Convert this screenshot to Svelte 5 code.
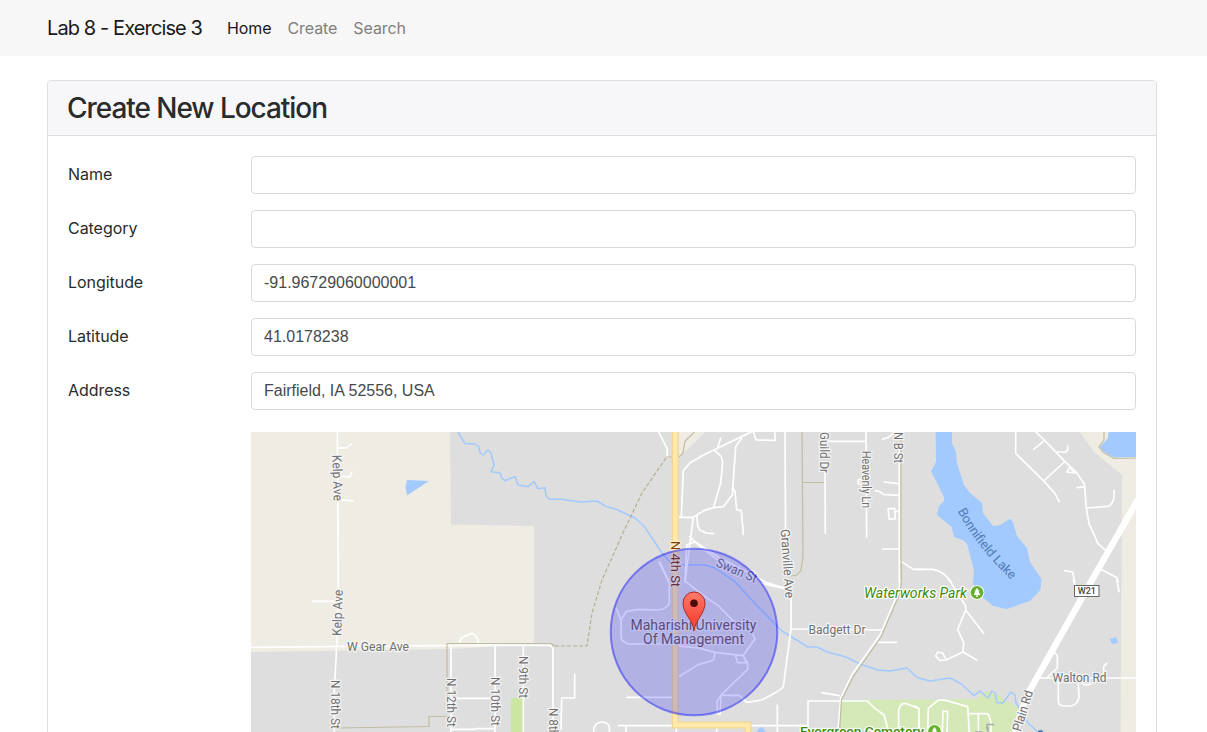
<script>
  const links = ['Home', 'Create', 'Search'];
  const fields = [
    { id: 'name', label: 'Name', value: '' },
    { id: 'category', label: 'Category', value: '' },
    { id: 'longitude', label: 'Longitude', value: '-91.96729060000001' },
    { id: 'latitude', label: 'Latitude', value: '41.0178238' },
    { id: 'address', label: 'Address', value: 'Fairfield, IA 52556, USA' }
  ];

  // Street geometry is stored per map tile, in tile units of a third of a pixel.
  const tiles = [
    { x: 250, y: 430, d: 'M262 0L265 456M262 54H290L303 42M264 140H300L306 126M268 209L310 213' },
    { x: 475, y: 430, d: 'M548 0L577 57V82M675 82L645 98L625 122L619 262M610 262H655L675 248M655 262L630 456M666 256L668 288L675 300M644 320L675 350M554 395L580 450' },
    { x: 700, y: 430, d: 'M0 80L155 5M62 24L52 56M44 62L64 80L68 96L62 160L40 233M125 24L107 50L97 195L70 230L40 233L12 242L0 250M97 176L105 184L110 240L124 242L130 313M0 300L18 309L40 311M160 5L168 30L226 31L224 5M255 5L257 360M0 350L60 395M375 34H497M375 100L376 310M498 5L500 322M484 147L475 150V162L484 164M580 10L565 22L548 28M598 60V456M552 156L597 161M526 182L540 185L550 193L597 196M564 236L584 235L586 266L568 268L564 236M586 244H597M548 357H598M600 392L640 418H675' },
    { x: 915, y: 430, d: 'M302 5V70L385 152L420 190L433 216M362 5L388 30L450 95L485 128L508 162L514 235L522 280L549 341L575 364M388 32L356 58M426 66H452Q460 64 458 48M448 96L386 153M464 112L456 126L480 129M466 112L474 124M508 170L486 173M515 234L580 229Q600 220 597 182M0 418H54Q88 424 108 456M448 422L473 426L479 456M558 418L606 443L609 456' },
    { x: 250, y: 580, d: 'M265 0L260 200L253 330V456M188 64H260M3 202L400 198L675 196M603 198V456M630 190L632 175L665 160L675 166M605 355H675M604 448H675' },
    { x: 475, y: 580, d: 'M0 166L8 176L10 194M0 196H222Q235 198 234 212V456M60 198V456M145 198V456M0 355H60M0 446H60M299 283V354H260L258 448M356 456Q355 427 382 426Q407 428 403 456M430 437H604M453 437V456M456 352H600M604 437V456' },
    { x: 700, y: 580, d: 'M185 9Q220 20 270 27M273 40V146L250 320Q245 330 185 360L140 367L118 346H66M275 147L545 150M600 0L596 35L540 165L455 285L422 355L414 456M533 187H590M365 338L418 347M232 375V456M145 437H324M324 437V363H502L525 385L552 405L566 456M50 440V456M596 456V390Q602 367 620 371L657 386L656 456' },
    { x: 915, y: 580, d: 'M103 0L152 78V90L128 148L146 188L144 216L93 240L74 241L62 228L68 216L83 219L93 238M152 90L206 160M144 216L185 240M367 294H663M418 218L427 226V264L397 292M566 292V260L575 250M430 300V365Q432 378 448 378H465Q488 375 492 352L490 312M500 310Q515 320 530 310M475 0L481 20M606 0L612 35M38 456L40 385L70 360L92 361L158 380L163 456M82 456L84 394H98L96 456M163 401H215Q230 405 228 456M0 378L12 387V456M190 403V456' },
    { x: 605, y: 540, d: 'M240 125L245 15L270 5L335 48L485 128L540 145M163 67L193 130V190Q187 207 160 210L100 208L64 214L48 240L34 205M48 240V285L50 300L68 312H220M242 125L300 170L340 197L382 240L440 275L450 297L414 347L330 337L280 324L220 318M330 338L326 360L280 374L222 410M392 348L398 368H428L414 347L428 372V388L348 465L336 485L337 520L345 524L348 465' }
  ];

  const labels = [
    { t: 'Kelp Ave', x: 333, y: 478, r: 88, w: 46 },
    { t: 'Kelp Ave', x: 342, y: 613, r: -88, w: 46 },
    { t: 'W Gear Ave', x: 378, y: 651, r: 0, w: 62 },
    { t: 'N 18th St', x: 330.5, y: 704.5, r: 90, w: 49 },
    { t: 'N 12th St', x: 447, y: 702.5, r: 90, w: 49 },
    { t: 'N 10th St', x: 491, y: 701.5, r: 90, w: 49 },
    { t: 'N 9th St', x: 519, y: 677, r: 90, w: 42 },
    { t: 'N 8th St', x: 549, y: 729, r: 90, w: 42 },
    { t: 'Guild Dr', x: 820, y: 452.5, r: 90, w: 41 },
    { t: 'N B St', x: 894, y: 447.5, r: 90, w: 31 },
    { t: 'Heavenly Ln', x: 862, y: 479.5, r: 90, w: 57, s: 12 },
    { t: 'Granville Ave', x: 783, y: 564, r: 86, w: 69 },
    { t: 'Badgett Dr', x: 837, y: 634, r: 0, w: 57 },
    { t: 'Walton Rd', x: 1079.5, y: 682, r: 0, w: 54 },
    { t: 'Plain Rd', x: 1027, y: 712, r: -73, w: 42 },
    { t: 'Swan St', x: 735, y: 574.5, r: 23, w: 43 },
    { t: 'N 4th St', x: 671, y: 564, r: 90, w: 46, c: 'highway' },
    { t: 'Maharishi University', x: 693.5, y: 630, r: 0, w: 126, s: 14, c: 'campus' },
    { t: 'Of Management', x: 693.5, y: 644, r: 0, w: 101, s: 14, c: 'campus' },
    { t: 'Waterworks Park', x: 915.5, y: 597.5, r: 0, w: 103, s: 14, c: 'park' },
    { t: 'Evergreen Cemetery', x: 862, y: 735.5, r: 0, w: 124, s: 13.5, c: 'cemetery' }
  ];
  const trees = [{ x: 977, y: 592.5 }, { x: 934.5, y: 731.5 }];
</script>

<div class="page">
  <nav>
    <a class="brand" href="#home">Lab 8 - Exercise 3</a>
    {#each links as link, i}
      <a class="link" class:active={i === 0} href="#{link.toLowerCase()}">{link}</a>
    {/each}
  </nav>

  <main class="card">
    <header><h3>Create New Location</h3></header>
    <form>
      {#each fields as field}
        <div class="row">
          <label for={field.id}>{field.label}</label>
          <input id={field.id} type="text" value={field.value} />
        </div>
      {/each}

      <div class="row map-row">
        <svg class="map" viewBox="251 432 885 320" width="885" height="320" role="img" aria-label="Map">
          <defs>
            <linearGradient id="pin" x1="0" y1="0" x2="0" y2="1">
              <stop offset="0" stop-color="#ff7a6b" />
              <stop offset=".7" stop-color="#f8493a" />
            </linearGradient>
          </defs>
          <rect x="251" y="432" width="885" height="320" fill="#dedede" />
          <path class="land" d="M251 432H450L451 524.5L534 526V644L450 649L251 652Z" />
          <path class="land" d="M1080 432L1094 452L1122 475L1120.500 752H1136V432Z" />
          <path class="land" d="M679 432H705L692 445L679 457Z" />
          <path fill="#cbe6a3" d="M511 698H523.500V752H511Z" />
          <path fill="#d5e8b8" d="M840 700L976 699L983 694L988 691L1000 696L1018 708L1015 752H838Z" />

          <path class="water" d="M935.700 432L936 462L931 471L944 497V501L939 506L937 515L951.700 527L954 537L963 540L967 544L974 570L973 584L980 595L993 606L1007 609L1030 601L1040.500 590L1041.500 579L1030 562L1027 548L1017 536L1013 522L1010 518.700L1000 525L993 526L983 513L982 503L970 493L964 485L957 463L956 452L952 443V432Z" />
          <path class="water" d="M1108.500 432L1108 438L1100 447L1103 451L1114 457.500L1136 457V432Z" />
          <path class="water" d="M407 480L429 481L407 495.500L405.500 487ZM1110 639L1116 637L1118 643L1112 644ZM757 732L758 729L762 727L766 732Z" />
          <path class="stream" d="M458 432L465 443.500L475 444L479 447L480 452.500L483 455L488 450L491 452.700L494 465L491 471.700L500 472.700L501.700 478L505 480.700L515 476.500L518 485L528 486.700L534 481.700L538 488.700L545 487.700L546 496L550 499.300H562L580 502L597 501L605 506L618 510L635 518L644 526L662 553L670 561.700L682 565H705L715 568L735 581.700L758 606.700L782 631L808 647H817L827 652L845 656.700L860 664L878 670L890 671L907 668L917 677.500L930 681L950 678L961.500 684L974 695.700L980 691L988 698L992 691L995 693L997 702.700H1003L1011 692L1015 695L1016 703L1028 723L1038 732" />

          {#each tiles as tile}
            <path class="road" transform="translate({tile.x} {tile.y}) scale(.33333)" d={tile.d} />
          {/each}
          <path class="bound" d="M694.500 432L685 441L683 453L679 457H666M802 432L803 557L801 570L797 575L791 576M802 482.500H824M901 438V557L901.500 580L900.500 592L881 637L853 677L841.500 700L839.500 732M447 714V643.500H551L555 645.500M338 728L429 726.500V716.500H449M1104 432V440L1099 447L1103 452L1114 458.500L1136 458" />
          <path class="bound dash" d="M666 458L642 493L622 535L602 580L592 613L587 646H552" />
          <path fill="none" stroke="#fff" stroke-width="6.5" d="M1138 499.500L1092 580L1030 690Q1023 704 1015 732V752" />
          <path fill="none" stroke="#f3d695" stroke-width="7" d="M675.300 430V725H748V752" />
          <path fill="none" stroke="#ffe9a9" stroke-width="4.500" d="M675.300 430V725H748V752" />
          <path fill="none" stroke="#a8a8a8" stroke-width="1.300" d="M987 730V724.500H994M988 727V732M975 732H982" />

          {#each labels as l}
            <text class="street {l.c ?? ''}" transform="translate({l.x} {l.y}) rotate({l.r})" font-size={l.s ?? 13} textLength={l.w} lengthAdjust="spacingAndGlyphs">{l.t}</text>
          {/each}
          <path id="lake-line" fill="none" d="M957.500 511Q977 549 1020 588" />
          <text class="lake" font-size="13"><textPath href="#lake-line" textLength="88">Bonnifield Lake</textPath></text>

          {#each trees as tree}
            <g transform="translate({tree.x} {tree.y})">
              <circle r="7.300" fill="#fff" />
              <circle r="6.400" fill="#68b12f" />
              <path fill="#fff" d="M0 -4.500L2.400 -1H1.500L3.400 2.500H.7V4.500H-.7V2.500H-3.400L-1.500 -1H-2.400Z" />
            </g>
          {/each}
          <rect x="1074.500" y="585.500" width="24.500" height="11" fill="#fff" stroke="#666" />
          <text class="shield" x="1086.800" y="594.300" font-size="9" textLength="18">W21</text>
          <circle cx="1040.500" cy="733" r="3" fill="#477fb8" />

          <circle cx="694" cy="632" r="83.300" fill="#00f" fill-opacity=".2" stroke="#00f" stroke-opacity=".42" stroke-width="2" />
          <path fill="url(#pin)" stroke="#a92d22" stroke-width="1" d="M694 631C692.500 619 683 614 683 603A11 11 0 0 1 705 603C705 614 695.500 619 694 631Z" />
          <circle cx="694" cy="603.300" r="3.800" fill="#4c0c08" />
        </svg>
      </div>
    </form>
  </main>
</div>

<style>
  :global(body) { margin: 0; background: #fff; overflow: hidden; }
  .page { height: 732px; overflow: hidden; box-sizing: border-box; font: 16px/24px Inter, sans-serif; color: #292b2c; }
  nav { height: 56px; box-sizing: border-box; padding: 0 47px; background: #f7f7f7; display: flex; align-items: center; gap: 16px; }
  a { text-decoration: none; }
  .brand { width: 156px; margin-right: 8px; font-size: 20px; letter-spacing: -.89px; color: #191919; white-space: nowrap; }
  .link { color: #808080; letter-spacing: -.08px; }
  .link.active { color: #191919; }
  .card { margin: 24px 50px 0 47px; border: 1px solid #dfdfdf; border-radius: 4px; box-sizing: border-box; height: 760px; }
  header { height: 55px; box-sizing: border-box; padding: 12px 20px 0 19px; background: #f7f7f9; border-bottom: 1px solid #dcdcdd; border-radius: 3px 3px 0 0; }
  h3 { margin: 0; font-size: 28px; line-height: 31px; font-weight: 500; letter-spacing: -1.05px; }
  form { padding: 20px; display: flex; flex-direction: column; gap: 16px; }
  .row { display: grid; grid-template-columns: 183px 885px; align-items: center; }
  label { letter-spacing: -.05px; padding-bottom: 2px; }
  input { width: 885px; height: 38px; box-sizing: border-box; padding: 0 12px; border: 1px solid #d9d9d9; border-radius: 4px; background: #fff; color: #464a4c; font: 16px "Liberation Sans", sans-serif; outline: 0; }
  .map-row { padding-top: 6px; }
  .map { grid-column: 2; display: block; overflow: hidden; }
  .land { fill: #efece3; }
  .water { fill: #a2caff; }
  .stream { fill: none; stroke: #a2caff; stroke-width: 1.5; stroke-linejoin: round; }
  .bound { fill: none; stroke: #c1bca2; stroke-width: 1.2; }
  .dash { stroke: #b5b092; stroke-dasharray: 4 2; }
  .road { fill: none; stroke: #fff; stroke-width: 5; stroke-linejoin: round; stroke-linecap: round; }
  .street { font-family: Roboto, sans-serif; text-anchor: middle; fill: #707070; stroke: #f5f5f5; stroke-width: 2.5px; stroke-linejoin: round; paint-order: stroke; }
  .highway { fill: #7d3a0b; stroke: #fff0c9; }
  .campus { fill: #755c56; stroke: #eee; }
  .park, .cemetery { fill: #3c8b08; stroke: #fff; }
  .park { font-style: italic; }
  .cemetery { font-weight: 500; }
  .lake { font-family: Roboto, sans-serif; fill: #527cb5; }
  .shield { font-family: Roboto, sans-serif; font-weight: 500; text-anchor: middle; fill: #444; }
</style>
